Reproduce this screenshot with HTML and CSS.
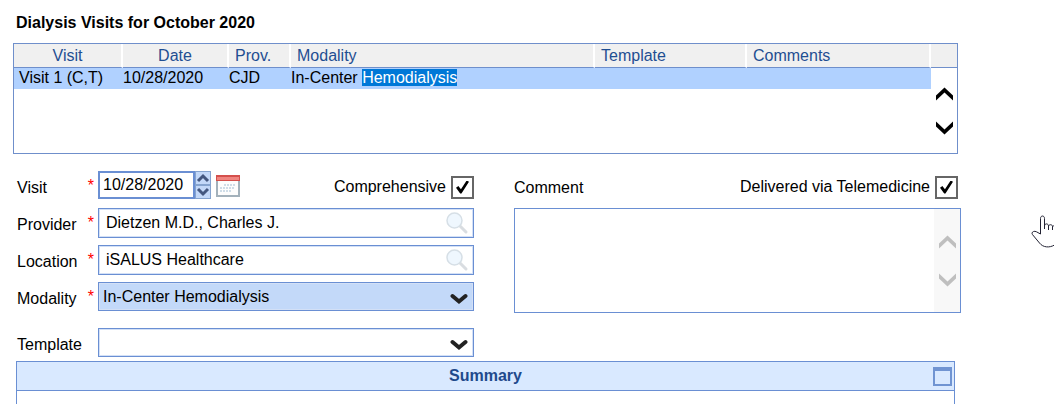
FILE: index.html
```html
<!DOCTYPE html>
<html lang="en">
<head>
  <meta charset="UTF-8" />
  <meta name="viewport" content="width=device-width, initial-scale=1.0" />
  <title>Dialysis Visits</title>
  <link rel="stylesheet" href="styles.css">
</head>
<body>
  <div class="page">
    <h1>Dialysis Visits for October 2020</h1>

    <table class="visits">
      <colgroup>
        <col class="col-visit"><col class="col-date"><col class="col-prov"><col class="col-modality">
        <col class="col-template"><col class="col-comments"><col class="col-scroll">
      </colgroup>
      <thead>
        <tr>
          <th class="center">Visit</th>
          <th class="center">Date</th>
          <th>Prov.</th>
          <th>Modality</th>
          <th>Template</th>
          <th>Comments</th>
          <th></th>
        </tr>
      </thead>
      <tbody>
        <tr class="selected">
          <td>Visit 1 (C,T)</td>
          <td>10/28/2020</td>
          <td>CJD</td>
          <td>In-Center <span class="highlight">Hemodialysis</span></td>
          <td></td>
          <td></td>
          <td class="scroll-cell" rowspan="2">
            <div class="scroller">
              <button type="button" aria-label="Scroll up">
                <svg width="17" height="14" viewBox="0 0 18 14"><path d="M0 8.5 9 0l9 8.5V14L9 5.5 0 14z" /></svg>
              </button>
              <button type="button" aria-label="Scroll down">
                <svg width="17" height="14" viewBox="0 0 18 14"><path d="M0 0l9 8.5L18 0v5.5L9 14 0 5.5z" /></svg>
              </button>
            </div>
          </td>
        </tr>
        <tr class="filler"><td colspan="6"></td></tr>
      </tbody>
    </table>

    <form class="visit-form">
      <div class="left">
        <div class="row">
          <label for="visitDate">Visit <span class="required">*</span></label>
          <div class="date-row">
            <div class="date-field">
              <input type="text" id="visitDate" value="10/28/2020">
              <div class="spinner">
                <button type="button" aria-label="Next day">
                  <svg width="14" height="12" viewBox="0 0 14 12"><path d="M2 9l5-5 5 5" /></svg>
                </button>
                <button type="button" aria-label="Previous day">
                  <svg width="14" height="12" viewBox="0 0 14 12"><path d="M2 3l5 5 5-5" /></svg>
                </button>
              </div>
            </div>
            <button type="button" class="calendar" aria-label="Open calendar">
              <svg width="24" height="22" viewBox="0 0 24 22">
                <rect x="1" y="1" width="22" height="20" fill="#fdfdfd" stroke="#a3b1bb" stroke-width="2" />
                <rect width="24" height="6" fill="#d4504c" />
                <rect x="1" y="2" width="22" height="3" fill="#f08580" />
                <path d="M8 10h11M4 13h15M4 16h11" stroke="#cfdde8" stroke-width="2" stroke-dasharray="2 1" />
              </svg>
            </button>
            <div class="check">
              <label for="comprehensive">Comprehensive</label>
              <input type="checkbox" id="comprehensive" checked>
            </div>
          </div>
        </div>

        <div class="row">
          <label for="provider">Provider <span class="required">*</span></label>
          <div class="field">
            <input type="text" id="provider" value="Dietzen M.D., Charles J.">
            <button type="button" class="search" aria-label="Find provider">
              <svg width="24" height="24" viewBox="0 0 24 24">
                <path d="M15 15l6 6" stroke="#d9dde1" stroke-width="3" stroke-linecap="round" />
                <circle cx="9.5" cy="9.5" r="7.5" fill="#eff7fe" stroke="#d6dfe6" stroke-width="1.5" />
              </svg>
            </button>
          </div>
        </div>

        <div class="row">
          <label for="location">Location <span class="required">*</span></label>
          <div class="field">
            <input type="text" id="location" value="iSALUS Healthcare">
            <button type="button" class="search" aria-label="Find location">
              <svg width="24" height="24" viewBox="0 0 24 24">
                <path d="M15 15l6 6" stroke="#d9dde1" stroke-width="3" stroke-linecap="round" />
                <circle cx="9.5" cy="9.5" r="7.5" fill="#eff7fe" stroke="#d6dfe6" stroke-width="1.5" />
              </svg>
            </button>
          </div>
        </div>

        <div class="row">
          <label for="modality">Modality <span class="required">*</span></label>
          <div class="field dropdown filled">
            <select id="modality">
              <option>In-Center Hemodialysis</option>
            </select>
            <svg class="arrow" width="18" height="12" viewBox="0 0 18 12"><path d="M2.5 3L9 8.5 15.5 3" /></svg>
          </div>
        </div>

        <div class="row template-row">
          <label for="template">Template</label>
          <div class="field dropdown">
            <select id="template">
              <option></option>
            </select>
            <svg class="arrow" width="18" height="12" viewBox="0 0 18 12"><path d="M2.5 3L9 8.5 15.5 3" /></svg>
          </div>
        </div>
      </div>

      <div class="right">
        <div class="comment-head">
          <label for="comment">Comment</label>
          <div class="check">
            <label for="telemedicine">Delivered via Telemedicine</label>
            <input type="checkbox" id="telemedicine" checked>
          </div>
        </div>
        <div class="comment-box">
          <textarea id="comment"></textarea>
          <div class="scroller disabled">
            <button type="button" aria-label="Scroll comment up" disabled>
              <svg width="17" height="14" viewBox="0 0 18 14"><path d="M0 8.5 9 0l9 8.5V14L9 5.5 0 14z" /></svg>
            </button>
            <button type="button" aria-label="Scroll comment down" disabled>
              <svg width="17" height="14" viewBox="0 0 18 14"><path d="M0 0l9 8.5L18 0v5.5L9 14 0 5.5z" /></svg>
            </button>
          </div>
        </div>
      </div>
    </form>

    <section class="summary">
      <header class="summary-head">
        <h2>Summary</h2>
        <button type="button" class="maximize" aria-label="Maximize summary"></button>
      </header>
    </section>
  </div>

  <!-- hand pointer -->
  <svg class="pointer" width="23" height="34" viewBox="0 0 23 34">
    <path d="M9.5 19V3.500c0-3.300 4-3.300 4 0V14M13.500 11c0-2.800 4-2.800 4 0v4M17.500 11.500c0-2.400 4-2.400 4 0V15M21.500 12c.3-1 1-1.400 2-1.400M9.500 19l-4-2.200c-3-1.600-5.600.9-4 2.800l7 8.400c3.500 4.600 10 5 15 2" />
  </svg>
</body>
</html>
```

FILE: styles.css
```css
* {
  box-sizing: border-box;
}

body {
  font-family: "Liberation Sans", Arial, sans-serif;
  font-size: 16px;
  line-height: 20px;
  margin: 0;
  color: #000;
  background: #fff;
  overflow: hidden;
}

input,
select,
textarea,
button {
  font: inherit;
  color: inherit;
  margin: 0;
  padding: 0;
  border: none;
  background: none;
  outline: none;
}

button {
  display: flex;
  align-items: center;
  justify-content: center;
  cursor: pointer;
}

.page {
  display: flex;
  flex-direction: column;
  height: 100vh;
  padding: 13px 93px 0 13px;
}

h1 {
  font-size: 16px;
  margin: 0 3px 10px;
}

/* visits table */
.visits {
  width: calc(100% - 3px);
  height: 111px;
  flex: none;
  table-layout: fixed;
  border-collapse: separate;
  border-spacing: 0;
  border: 1px solid #6f8fcb;
}

.col-visit { width: 109px; }
.col-date { width: 106px; }
.col-prov { width: 62px; }
.col-template { width: 152px; }
.col-comments { width: 184px; }
.col-scroll { width: 26px; }

.visits th {
  height: 24px;
  padding: 0 6px;
  background: #f0f0f0;
  border-right: 2px solid #fff;
  border-bottom: 1px solid #6f8fcb;
  color: #1f4e92;
  font-weight: normal;
  text-align: left;
}

.visits th.center {
  text-align: center;
}

.visits th:last-child {
  border-right: none;
}

.visits td {
  padding: 0;
  white-space: nowrap;
}

.selected td {
  height: 21px;
  vertical-align: top;
  background: #b0d1ff;
}

.selected td:first-child {
  padding-left: 5px;
}

.selected .scroll-cell {
  height: auto;
  background: #fff;
}

.filler td {
  height: 64px;
}

.highlight {
  background: #0078d7;
  color: #fff;
}

.scroller {
  display: flex;
  flex-direction: column;
  align-items: center;
  gap: 20px;
  padding-top: 19px;
}

/* form */
.visit-form {
  display: grid;
  grid-template-columns: 458px 1fr;
  gap: 40px;
  margin: 17px 0 4px 3px;
}

.left {
  display: flex;
  flex-direction: column;
  gap: 7px;
}

.row {
  display: grid;
  grid-template-columns: 82px 1fr;
  height: 30px;
}

.row > label {
  display: flex;
  justify-content: space-between;
  padding: 7px 4px 0 1px;
}

.required {
  color: #f00;
  line-height: 16px;
}

.date-row {
  display: flex;
}

.date-field {
  display: flex;
  width: 112px;
  height: 28px;
}

.date-field input {
  width: 97px;
  padding: 0 3px;
  border: 2px solid #6a8fd3;
}

.spinner {
  display: flex;
  flex-direction: column;
  flex: 1;
}

.spinner button {
  flex: 1;
  background: #c3d8f8;
  border: 1px solid #86a4cf;
}

.spinner path {
  fill: none;
  stroke: #44577f;
  stroke-width: 3;
}

.calendar {
  align-self: center;
  margin-left: 6px;
}

.check {
  display: flex;
  align-items: center;
  gap: 5px;
  height: 24px;
  margin-top: 4px;
  margin-left: auto;
}

.check input {
  appearance: none;
  position: relative;
  width: 23px;
  height: 23px;
  border: 2px solid #666;
}

.check input:checked::after {
  content: "";
  position: absolute;
  inset: 3px;
  background: #000;
  clip-path: polygon(0 55%, 18% 42%, 38% 68%, 82% 0, 100% 10%, 42% 100%, 32% 100%);
}

.field {
  display: flex;
  align-items: center;
  border: 1px solid #6a8fd3;
  box-shadow: inset 0 0 0 1px #d3e0f6;
}

.field input {
  flex: 1;
  min-width: 0;
  padding-left: 7px;
}

.search {
  margin-right: 4px;
}

.dropdown {
  position: relative;
  height: 29px;
}

.dropdown select {
  appearance: none;
  width: 100%;
  height: 100%;
  padding-left: 4px;
}

.filled {
  background: #c3d9f9;
}

.arrow {
  position: absolute;
  right: 5px;
  top: 10px;
  pointer-events: none;
}

.arrow path {
  fill: none;
  stroke: #222;
  stroke-width: 4;
  stroke-linecap: round;
}

.template-row {
  margin-top: 9px;
  height: 29px;
}

.comment-head {
  display: flex;
  height: 37px;
  padding-right: 3px;
}

.comment-head > label {
  padding-top: 7px;
}

.comment-box {
  display: flex;
  height: 105px;
  border: 1px solid #6a8fd3;
}

.comment-box textarea {
  flex: 1;
  resize: none;
}

.disabled {
  width: 26px;
  gap: 24px;
  padding-top: 26px;
  background: #f8f8f8;
}

.disabled path {
  fill: #bfbfbf;
}

/* summary panel */
.summary {
  flex: 1;
  margin: 0 6px 0 3px;
  border: 1px solid #6a8fd3;
  border-bottom: none;
}

.summary-head {
  display: grid;
  grid-template-columns: 1fr auto;
  align-items: center;
  height: 29px;
  padding-right: 2px;
  background: #d9e9ff;
  border-bottom: 1px solid #6a8fd3;
}

h2 {
  margin: 0;
  padding-left: 21px;
  font-size: 16px;
  color: #1f4a8c;
  text-align: center;
}

.maximize {
  width: 19px;
  height: 19px;
  border: 2px solid #7094d2;
  border-top-width: 4px;
}

.pointer {
  position: absolute;
  top: 215px;
  right: 0;
}

.pointer path {
  fill: #fff;
  stroke: #223;
  stroke-width: 1;
}
```
